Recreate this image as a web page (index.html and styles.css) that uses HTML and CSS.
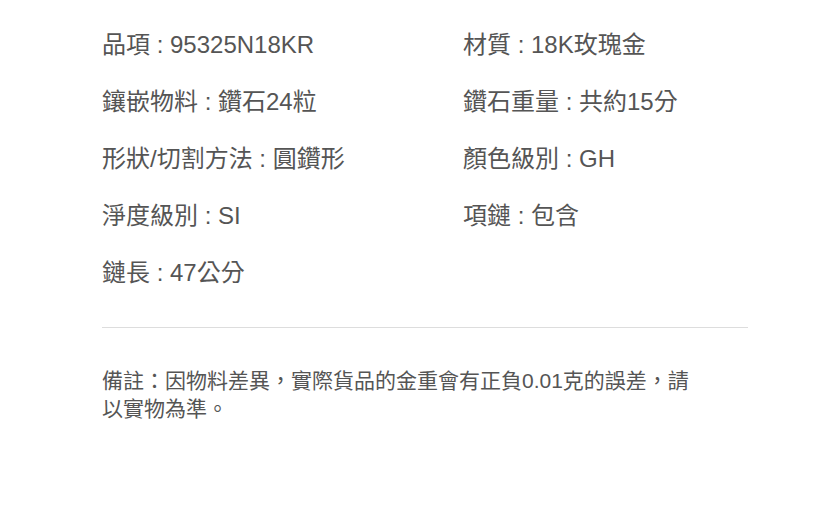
FILE: index.html
```html
<!DOCTYPE html>
<html lang="zh-Hant">
<head>
    <meta charset="UTF-8">
    <meta name="viewport" content="width=device-width, initial-scale=1.0">
    <title>商品規格</title>
    <link rel="stylesheet" href="styles.css">
</head>
<body>

    <div class="spec-container">
        <div class="spec-grid">
            <div class="spec-item">品項 : 95325N18KR</div>
            <div class="spec-item">材質 : 18K玫瑰金</div>
            <div class="spec-item">鑲嵌物料 : 鑽石24粒</div>
            <div class="spec-item">鑽石重量 : 共約15分</div>
            <div class="spec-item">形狀/切割方法 : 圓鑽形</div>
            <div class="spec-item">顏色級別 : GH</div>
            <div class="spec-item">淨度級別 : SI</div>
            <div class="spec-item">項鏈 : 包含</div>
            <div class="spec-item">鏈長 : 47公分</div>
        </div>

        <hr class="divider">

        <p class="note">備註：因物料差異，實際貨品的金重會有正負0.01克的誤差，請以實物為準。</p>
    </div>

</body>
</html>
```

FILE: styles.css
```css
body {
    font-family: "Liberation Sans", "Noto Sans CJK TC", sans-serif;
    background-color: #ffffff;
    color: #555555;
    margin: 0;
}

.spec-container {
    width: 646px;
    padding: 16px 0 0 102px;
}

.spec-grid {
    display: grid;
    grid-template-columns: 361px 1fr;
}

.spec-item {
    font-size: 24px;
    line-height: 57px;
    white-space: nowrap;
}

.divider {
    border: 0;
    border-top: 1px solid #dddddd;
    height: 0;
    margin: 26px 0 0;
}

.note {
    max-width: 600px;
    font-size: 21px;
    line-height: 28px;
    margin: 39px 0 0;
}
```
